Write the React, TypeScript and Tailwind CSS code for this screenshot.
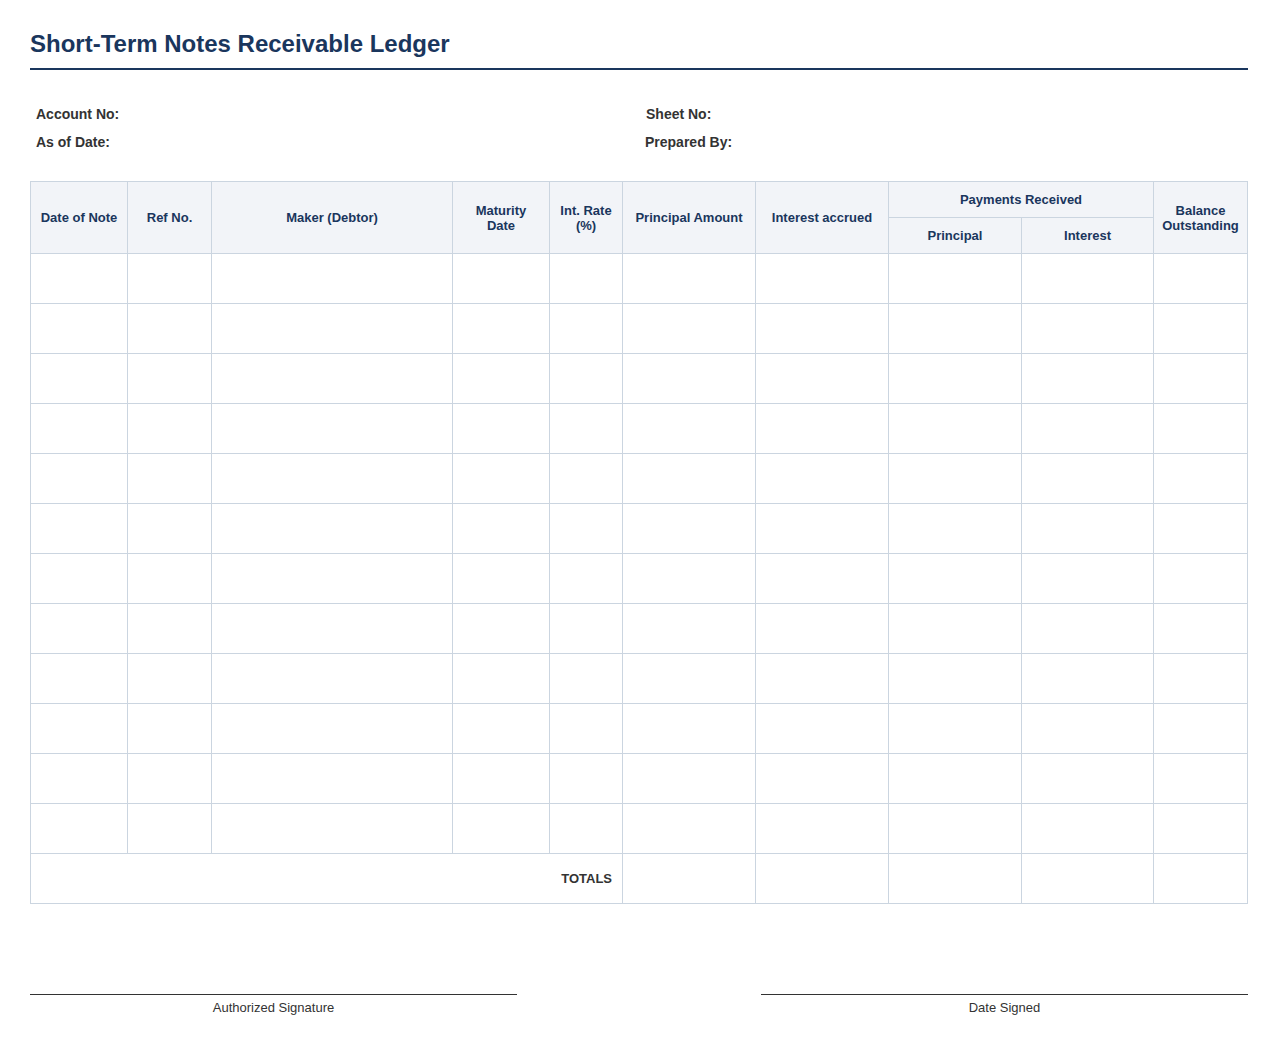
import React from 'react';

const widths = [97, 84, 241, 97, 73, 133, 133, 133, 132, 94];
const rows = Array.from({ length: 12 }, (_, i) => i);

const th = 'border border-[#cbd5e0] bg-[#f2f4f8] px-2 text-center align-middle text-[13px] leading-[15px] font-bold text-[#1a365d]';
const td = 'border border-[#cbd5e0] p-0';

const App: React.FC = () => {
  return (
    <div className="min-h-[1045px] bg-white px-[30px] pt-[30px] font-['Liberation_Sans',Arial,sans-serif] text-[#333333]">
      <h1 className="h-[40px] border-b-2 border-[#1a365d] text-[24px] leading-[28px] font-bold text-[#1a365d]">
        Short-Term Notes Receivable Ledger
      </h1>

      <div className="mt-[30px] grid grid-cols-[1fr_1fr] px-[6px] text-[14px] leading-[28px] font-bold">
        <div>Account No:</div>
        <div className="pl-[7px]">Sheet No:</div>
        <div>As of Date:</div>
        <div className="pl-[6px]">Prepared By:</div>
      </div>

      <table className="mt-[25px] w-[1217px] table-fixed border-collapse">
        <colgroup>
          {widths.map((w, i) => (
            <col key={i} style={{ width: w }} />
          ))}
        </colgroup>
        <thead>
          <tr className="h-[36px]">
            <th rowSpan={2} className={th}>Date of Note</th>
            <th rowSpan={2} className={th}>Ref No.</th>
            <th rowSpan={2} className={th}>Maker (Debtor)</th>
            <th rowSpan={2} className={th}>Maturity<br />Date</th>
            <th rowSpan={2} className={th}>Int. Rate<br />(%)</th>
            <th rowSpan={2} className={th}>Principal Amount</th>
            <th rowSpan={2} className={th}>Interest accrued</th>
            <th colSpan={2} className={th}>Payments Received</th>
            <th rowSpan={2} className={th}>Balance<br />Outstanding</th>
          </tr>
          <tr className="h-[36px]">
            <th className={th}>Principal</th>
            <th className={th}>Interest</th>
          </tr>
        </thead>
        <tbody>
          {rows.map((r) => (
            <tr key={r} className="h-[50px]">
              {widths.map((_, i) => (
                <td key={i} className={td}></td>
              ))}
            </tr>
          ))}
          <tr className="h-[50px]">
            <td colSpan={5} className="border border-[#cbd5e0] px-[10px] text-right text-[13px] font-bold text-[#333333]">TOTALS</td>
            {widths.slice(5).map((_, i) => (
              <td key={i} className={td}></td>
            ))}
          </tr>
        </tbody>
      </table>

      <div className="mt-[90px] flex justify-between">
        <div className="w-[487px] border-t border-[#333333] pt-[5px] text-center text-[13px] leading-[16px]">Authorized Signature</div>
        <div className="w-[487px] border-t border-[#333333] pt-[5px] text-center text-[13px] leading-[16px]">Date Signed</div>
      </div>
    </div>
  );
};

export default App;
